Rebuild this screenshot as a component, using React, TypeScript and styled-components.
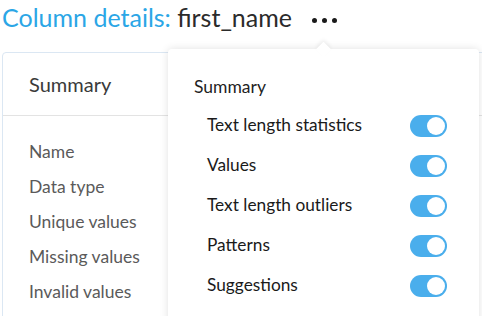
import React from 'react';
import styled, { createGlobalStyle } from 'styled-components';

const GlobalStyle = createGlobalStyle`
	html, body {
		margin: 0;
		padding: 0;
		background: #fff;
		overflow: hidden;
	}
	body {
		font-family: Lato, 'Open Sans', sans-serif;
	}
`;

const summaryRows = ['Name', 'Data type', 'Unique values', 'Missing values', 'Invalid values'];
const menuItems = ['Text length statistics', 'Values', 'Text length outliers', 'Patterns', 'Suggestions'];

const Toggle = ({ on }: { on: boolean }) => (
	<Track on={on}>
		<Knob />
	</Track>
);

const App = () => {
	return (
		<Page>
			<GlobalStyle />
			<Header>
				<Title>
					<Accent>Column details:</Accent> first_name
				</Title>
				<Dots>
					<Dot />
					<Dot />
					<Dot />
				</Dots>
			</Header>
			<Body>
				<Card>
					<CardHead>Summary</CardHead>
					<RowList>
						{summaryRows.map((row) => (
							<Row key={row}>{row}</Row>
						))}
					</RowList>
				</Card>
				<Popover>
					<MenuTitle>Summary</MenuTitle>
					{menuItems.map((item) => (
						<MenuItem key={item}>
							<span>{item}</span>
							<Toggle on />
						</MenuItem>
					))}
				</Popover>
			</Body>
		</Page>
	);
};

const Page = styled('div')({
	width: '482px',
	height: '316px',
	position: 'relative',
	overflow: 'hidden',
});

const Header = styled('div')({
	display: 'flex',
	alignItems: 'flex-start',
	height: '40px',
	paddingLeft: '2px',
});

const Title = styled('h1')({
	margin: 0,
	fontSize: '25px',
	fontWeight: 400,
	color: '#2b2b2b',
	lineHeight: '34px',
});

const Accent = styled.span`
	color: #2ba6e6;
`;

const Dots = styled('div')({
	display: 'flex',
	gap: '5px',
	marginLeft: '20px',
	marginTop: '18px',
});

const Dot = styled.span`
	width: 5px;
	height: 5px;
	border-radius: 50%;
	background: #1a1a1a;
`;

const Body = styled('div')({
	position: 'relative',
	paddingTop: '12px',
	paddingLeft: '2px',
});

const Card = styled('div')({
	width: '600px',
	height: '300px',
	border: '1px solid #dbe7f3',
	borderRadius: '4px',
	boxSizing: 'border-box',
});

const CardHead = styled('div')({
	height: '62px',
	display: 'flex',
	alignItems: 'center',
	paddingLeft: '26px',
	fontSize: '20px',
	color: '#3a3a3a',
	borderBottom: '1px solid #e3e3e3',
});

const RowList = styled('div')({
	display: 'flex',
	flexDirection: 'column',
	paddingTop: '18px',
	paddingLeft: '26px',
});

const Row = styled('div')({
	height: '35px',
	lineHeight: '35px',
	fontSize: '17.5px',
	color: '#5a5a5a',
});

const Popover = styled('div')({
	position: 'absolute',
	top: '9px',
	left: '168px',
	width: '311px',
	height: '290px',
	background: '#fff',
	borderRadius: '4px',
	boxShadow: '0 0 8px rgba(0,0,0,0.12)',
	boxSizing: 'border-box',
	padding: '23px 32px 0 26px',
	'&::before': {
		content: '""',
		position: 'absolute',
		top: '-5.5px',
		left: '149.5px',
		width: '11px',
		height: '11px',
		background: '#fff',
		transform: 'rotate(45deg)',
		boxShadow: '-2px -2px 4px rgba(0,0,0,0.06)',
	},
});

const MenuTitle = styled('div')({
	fontSize: '17.5px',
	color: '#1f1f1f',
	height: '30px',
	lineHeight: '30px',
	marginBottom: '2px',
});

const MenuItem = styled('div')({
	display: 'flex',
	alignItems: 'center',
	justifyContent: 'space-between',
	height: '40px',
	paddingLeft: '13px',
	fontSize: '17.3px',
	color: '#1a1a1a',
});

const Track = styled.span<{ on: boolean }>`
	display: flex;
	align-items: center;
	justify-content: ${(props) => (props.on ? 'flex-end' : 'flex-start')};
	width: 37px;
	height: 22px;
	padding: 2px;
	margin-top: 3px;
	box-sizing: border-box;
	border-radius: 11px;
	background: ${(props) => (props.on ? '#4aaeec' : '#c7c7c7')};
`;

const Knob = styled.span`
	width: 18px;
	height: 18px;
	border-radius: 50%;
	background: #fff;
`;

export default App;
